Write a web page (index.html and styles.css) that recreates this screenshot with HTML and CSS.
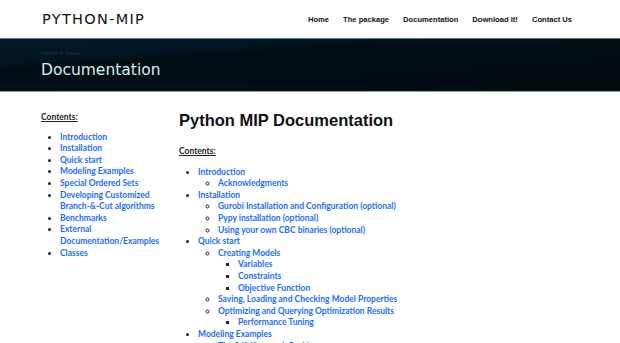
FILE: index.html
```html
<!DOCTYPE html>
<html lang="en">
<head>
    <meta charset="UTF-8">
    <meta name="viewport" content="width=device-width, initial-scale=1.0">
    <title>Python-MIP Documentation</title>
    <link rel="stylesheet" href="styles.css">
</head>
<body>
    <header class="topbar">
        <div class="logo">PYTHON-MIP</div>
        <nav class="menu">
            <a href="#">Home</a>
            <a href="#">The package</a>
            <a href="#">Documentation</a>
            <a href="#">Download it!</a>
            <a href="#">Contact Us</a>
        </nav>
    </header>

    <div class="banner">
        <div class="crumbs">Home &gt; Docs</div>
        <h1 class="banner-title">Documentation</h1>
    </div>

    <div class="page">
        <aside class="sidebar">
            <p class="contents">Contents:</p>
            <ul>
                <li><a href="#">Introduction</a></li>
                <li><a href="#">Installation</a></li>
                <li><a href="#">Quick start</a></li>
                <li><a href="#">Modeling Examples</a></li>
                <li><a href="#">Special Ordered Sets</a></li>
                <li><a href="#">Developing Customized Branch-&amp;-Cut algorithms</a></li>
                <li><a href="#">Benchmarks</a></li>
                <li><a href="#">External Documentation/Examples</a></li>
                <li><a href="#">Classes</a></li>
            </ul>
        </aside>

        <main class="doc">
            <h2>Python MIP Documentation</h2>
            <p class="contents">Contents:</p>
            <ul>
                <li><a href="#">Introduction</a>
                    <ul>
                        <li><a href="#">Acknowledgments</a></li>
                    </ul>
                </li>
                <li><a href="#">Installation</a>
                    <ul>
                        <li><a href="#">Gurobi Installation and Configuration (optional)</a></li>
                        <li><a href="#">Pypy installation (optional)</a></li>
                        <li><a href="#">Using your own CBC binaries (optional)</a></li>
                    </ul>
                </li>
                <li><a href="#">Quick start</a>
                    <ul>
                        <li><a href="#">Creating Models</a>
                            <ul>
                                <li><a href="#">Variables</a></li>
                                <li><a href="#">Constraints</a></li>
                                <li><a href="#">Objective Function</a></li>
                            </ul>
                        </li>
                        <li><a href="#">Saving, Loading and Checking Model Properties</a></li>
                        <li><a href="#">Optimizing and Querying Optimization Results</a>
                            <ul>
                                <li><a href="#">Performance Tuning</a></li>
                            </ul>
                        </li>
                    </ul>
                </li>
                <li><a href="#">Modeling Examples</a>
                    <ul>
                        <li><a href="#">The 0/1 Knapsack Problem</a></li>
                    </ul>
                </li>
            </ul>
        </main>
    </div>
</body>
</html>
```

FILE: styles.css
```css
body {
    margin: 0;
    background-color: #fff;
    font-family: Lato, "Open Sans", Arial, sans-serif;
    color: #222;
    overflow: hidden;
}

a {
    color: #1a6dff;
    text-decoration: none;
}

.topbar {
    height: 38px;
    display: flex;
    align-items: center;
    justify-content: space-between;
    padding: 0 48px 0 42px;
}

.logo {
    font-family: "DejaVu Sans", sans-serif;
    font-size: 14.5px;
    letter-spacing: 1.3px;
    color: #111;
    margin-top: -1px;
}

.menu {
    display: flex;
    gap: 14px;
}

.menu a {
    font-family: "Liberation Sans", Arial, sans-serif;
    font-weight: bold;
    font-size: 7.6px;
    color: #111;
}

.banner {
    height: 52px;
    padding: 0 41px;
    background: linear-gradient(176deg, #04192a 0%, #031522 25%, #020e15 32%, #020c11 100%);
    border-top: 1px solid #5d7e86;
    border-bottom: 1px solid #7fa3a8;
}

.crumbs {
    font-family: "DejaVu Sans", sans-serif;
    font-size: 5.5px;
    color: #1f3b4a;
    padding-top: 11px;
}

.banner-title {
    margin: 5px 0 0;
    font-family: "DejaVu Sans", sans-serif;
    font-weight: normal;
    font-size: 15.5px;
    color: #d6eeee;
}

.page {
    display: flex;
    padding: 20px 0 0 41px;
}

.sidebar {
    width: 138px;
    font-size: 8.5px;
    font-weight: bold;
    line-height: 11.6px;
}

.contents {
    margin: 0;
    font-weight: bold;
    text-decoration: underline;
    color: #222;
    font-size: 8.5px;
    line-height: 11.6px;
}

.sidebar ul {
    margin: 8px 0 0;
    padding-left: 19px;
}

.doc {
    font-size: 8.5px;
    font-weight: bold;
    line-height: 11.6px;
}

.doc h2 {
    margin: -3px 0 15px;
    font-family: "Liberation Sans", Arial, sans-serif;
    font-weight: bold;
    font-size: 16.5px;
    line-height: 22px;
    color: #111;
}

.doc ul {
    margin: 9px 0 0;
    padding-left: 19px;
}

.doc ul ul {
    margin: 0;
    padding-left: 20px;
}
```
